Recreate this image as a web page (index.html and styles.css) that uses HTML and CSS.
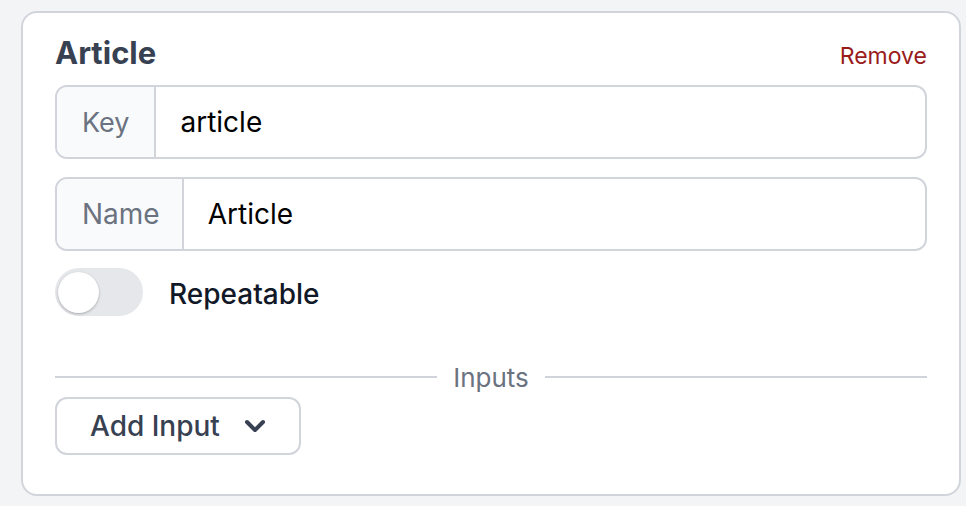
FILE: index.html
```html
<!DOCTYPE html>
<html>
<head>
<meta charset="utf-8">
<link rel="stylesheet" href="styles.css">
</head>
<body>
<div class="card">
  <div class="header">
    <h2 class="title">Article</h2>
    <a class="remove">Remove</a>
  </div>
  <div class="field field-key">
    <span class="addon">Key</span>
    <span class="value">article</span>
  </div>
  <div class="field field-name">
    <span class="addon addon-name">Name</span>
    <span class="value">Article</span>
  </div>
  <div class="toggle-row">
    <span class="toggle"><span class="knob"></span></span>
    <span class="toggle-label">Repeatable</span>
  </div>
  <div class="divider">
    <span class="line"></span>
    <span class="divider-text">Inputs</span>
    <span class="line"></span>
  </div>
  <div class="actions">
    <button class="add-btn">
      <span>Add Input</span>
      <svg class="chev" width="22" height="14" viewBox="0 0 22 14"><path d="M3 3 L11 11 L19 3" fill="none" stroke="#374151" stroke-width="4" stroke-linecap="round" stroke-linejoin="round"/></svg>
    </button>
  </div>
</div>
</body>
</html>
```

FILE: styles.css
```css
* { box-sizing: border-box; }
html, body { margin: 0; padding: 0; }
body {
  background: #f3f4f6;
  font-family: Inter, "Noto Sans", sans-serif;
  padding: 11px 5px 10px 21px;
  width: 966px;
  height: 506px;
  overflow: hidden;
}
.card {
  background: #fff;
  border: 2px solid #d1d5db;
  border-radius: 16px;
  padding: 22px 32px 39px 32px;
  height: 485px;
}
.header {
  display: flex;
  justify-content: space-between;
  align-items: baseline;
}
.title {
  margin: 0;
  font-size: 31px;
  line-height: 36px;
  font-weight: 700;
  color: #374151;
}
.remove {
  font-size: 23px;
  color: #991b1b;
  cursor: pointer;
}
.field {
  display: flex;
  height: 74px;
  border: 2px solid #d1d5db;
  border-radius: 12px;
  overflow: hidden;
  font-size: 28px;
}
.field-key { margin-top: 14px; }
.field-name { margin-top: 18px; }
.addon {
  display: flex;
  align-items: center;
  padding: 0 25px;
  background: #f9fafb;
  border-right: 2px solid #d1d5db;
  color: #6b7280;
  font-size: 27px;
}
.addon-name { font-size: 28px; padding: 0 22px 0 25px; }
.value {
  display: flex;
  align-items: center;
  padding-left: 24px;
  color: #000;
}
.toggle-row {
  display: flex;
  align-items: center;
  gap: 26px;
  margin-top: 17px;
}
.toggle {
  width: 88px;
  height: 48px;
  border-radius: 24px;
  background: #e5e7eb;
  display: flex;
  align-items: center;
  padding: 0 3px;
}
.knob {
  width: 41px;
  height: 41px;
  border-radius: 50%;
  background: #fff;
  box-shadow: 0 1px 3px rgba(0,0,0,0.18), 0 1px 2px rgba(0,0,0,0.1);
}
.toggle-label {
  font-size: 28px;
  font-weight: 500;
  color: #111827;
  margin-top: 4px;
}
.divider {
  display: flex;
  align-items: center;
  gap: 16px;
  margin-top: 43px;
  height: 36px;
}
.line {
  flex: 1;
  border-top: 2px solid #d1d5db;
}
.divider-text {
  font-size: 26px;
  color: #6b7280;
}
.actions {
  margin-top: 2px;
}
.add-btn {
  display: flex;
  align-items: center;
  gap: 24px;
  height: 58px;
  padding: 0 33px 0 33px;
  background: #fff;
  border: 2px solid #d1d5db;
  border-radius: 12px;
  font-family: inherit;
  font-size: 28px;
  font-weight: 500;
  color: #374151;
}
.chev { flex: none; }
```
